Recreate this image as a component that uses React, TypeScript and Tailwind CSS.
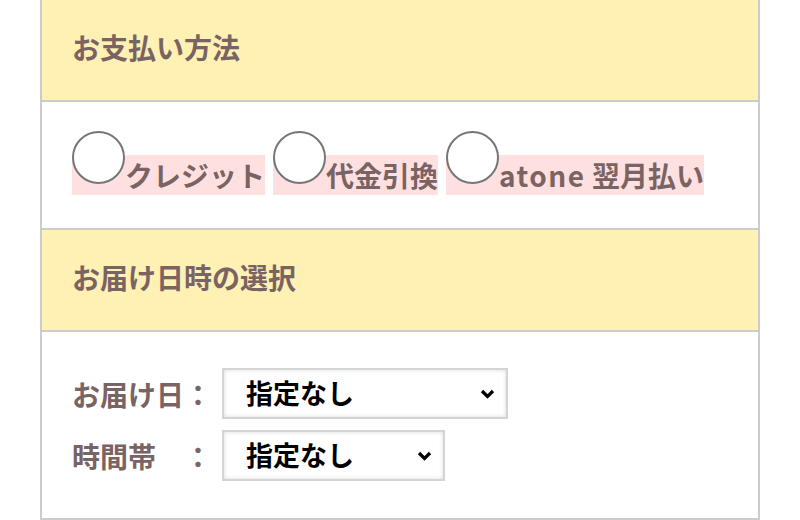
import React from "react";

const font = { fontFamily: '"Noto Sans CJK JP", "Noto Sans", sans-serif' };

const Header = ({ title }: { title: string }) => (
  <div className="h-[102px] flex items-center px-[30px] pb-[7px] bg-[#fff0b3] border-b-2 border-[#cccccc]">
    <h2 className="text-[28px] font-bold text-[#7a6363] leading-none">{title}</h2>
  </div>
);

const Radio = ({ children }: { children: React.ReactNode }) => (
  <label className="bg-[#ffe0e1] mr-[8px] cursor-pointer">
    <span className="inline-block w-[53px] h-[53px] rounded-full border-2 border-[#767676] bg-white align-baseline mb-[3px]"></span>
    {children}
  </label>
);

const Select = ({ width }: { width: string }) => (
  <div className={"relative " + width}>
    <select className="w-full h-[51px] appearance-none bg-white border-2 border-[#d4d4d4] shadow-[inset_0_0_4px_rgba(0,0,0,0.15)] pl-[22px] text-[27px] font-bold text-black outline-none">
      <option>指定なし</option>
    </select>
    <svg
      className="absolute right-[13px] top-1/2 -translate-y-1/2 pointer-events-none"
      width="15"
      height="11"
      viewBox="0 0 15 11"
    >
      <path d="M2 2.5l5.5 5.5 5.5-5.5" fill="none" stroke="#000" strokeWidth="3.2" />
    </svg>
  </div>
);

export default function App() {
  return (
    <div className="w-[800px] h-[520px] bg-white" style={font}>
      <div className="mx-[40px] border-2 border-t-0 border-[#cccccc]">
        <Header title="お支払い方法" />
        <div className="h-[128px] px-[30px] pt-[29px] text-[28px] font-bold text-[#7a6363] leading-none border-b-2 border-[#cccccc]">
          <Radio>クレジット</Radio>
          <Radio>代金引換</Radio>
          <Radio>
            <span className="tracking-[1.5px]">atone</span> 翌月払い
          </Radio>
        </div>
        <Header title="お届け日時の選択" />
        <div className="h-[186px] px-[30px] pt-[36px] flex flex-col gap-[11px]">
          <div className="flex items-center">
            <span className="w-[150px] text-[28px] font-bold text-[#7a6363]">お届け日：</span>
            <Select width="w-[286px]" />
          </div>
          <div className="flex items-center">
            <span className="w-[150px] text-[28px] font-bold text-[#7a6363]">時間帯　：</span>
            <Select width="w-[223px]" />
          </div>
        </div>
      </div>
    </div>
  );
}
